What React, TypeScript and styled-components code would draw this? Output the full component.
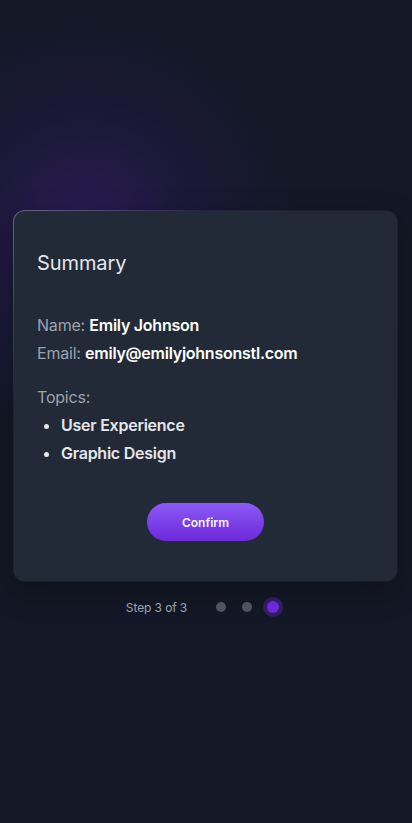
import styled, {createGlobalStyle} from 'styled-components'

const GlobalStyle = createGlobalStyle`
  html, body {
    margin: 0;
    padding: 0;
    background: #131826;
  }
  body {
    font-family: Inter, "Noto Sans", sans-serif;
    -webkit-font-smoothing: antialiased;
  }
`

const Page = styled.div`
  min-height: 823px;
  box-sizing: border-box;
  padding: 210px 14px 0 13px;
  background:
    radial-gradient(circle at 85px 225px, rgba(55, 28, 108, 0.65) 0px, rgba(42, 26, 88, 0.38) 100px, rgba(19, 24, 38, 0) 210px),
    #131826;
`

const Card = styled.section`
  box-sizing: border-box;
  width: 385px;
  padding: 38px 23px 40px;
  border-radius: 12px;
  border: 1px solid transparent;
  background:
    linear-gradient(#222a37, #222a37) padding-box,
    linear-gradient(135deg, rgba(255, 255, 255, 0.32), rgba(255, 255, 255, 0.05) 25%, rgba(255, 255, 255, 0.02)) border-box;
  box-shadow: 0 10px 30px rgba(0, 0, 0, 0.25);
`

const Title = styled.h2`
  margin: 0 0 34px;
  font-size: 20px;
  line-height: 28px;
  font-weight: 400;
  letter-spacing: -0.1px;
  color: #e5e7eb;
`

const Field = styled.p`
  margin: 0;
  font-size: 16px;
  line-height: 28px;
  letter-spacing: -0.2px;
  color: #9ca3af;
`

const Value = styled.span`
  color: #ffffff;
  font-weight: 600;
  letter-spacing: -0.25px;
`

const TopicsLabel = styled(Field)`
  margin-top: 16px;
`

const TopicList = styled.ul`
  margin: 0;
  padding-left: 24px;
  list-style: disc;
  color: #e5e7eb;

  li {
    font-size: 16px;
    line-height: 28px;
    font-weight: 600;
    letter-spacing: -0.25px;
  }
`

const Actions = styled.div`
  display: flex;
  justify-content: center;
  margin-top: 36px;
`

const ConfirmButton = styled.button`
  width: 117px;
  height: 38px;
  border: none;
  border-radius: 19px;
  background: linear-gradient(180deg, #8b5cf6, #6d28d9);
  color: #f3f4f6;
  font-family: inherit;
  font-size: 12px;
  font-weight: 600;
  cursor: pointer;
`

const Steps = styled.div`
  display: flex;
  align-items: center;
  justify-content: center;
  gap: 24px;
  margin-top: 15px;
  width: 383px;
`

const StepText = styled.span`
  font-size: 12px;
  letter-spacing: -0.1px;
  color: #9ca3af;
`

const Dots = styled.div`
  display: flex;
  gap: 6px;
`

const Dot = styled.span<{$active?: boolean}>`
  width: 20px;
  height: 20px;
  border-radius: 50%;
  display: flex;
  align-items: center;
  justify-content: center;
  background: ${p => (p.$active ? 'rgba(109, 40, 217, 0.35)' : 'transparent')};

  &::after {
    content: '';
    width: ${p => (p.$active ? '12px' : '10px')};
    height: ${p => (p.$active ? '12px' : '10px')};
    border-radius: 50%;
    background: ${p => (p.$active ? '#6d28d9' : '#4b5563')};
  }
`

const topics = ['User Experience', 'Graphic Design']

export default function App() {
    return (
        <>
            <GlobalStyle/>
            <Page>
                <Card>
                    <Title>Summary</Title>
                    <Field>Name: <Value>Emily Johnson</Value></Field>
                    <Field>Email: <Value>emily@emilyjohnsonstl.com</Value></Field>
                    <TopicsLabel>Topics:</TopicsLabel>
                    <TopicList>
                        {topics.map(t => <li key={t}>{t}</li>)}
                    </TopicList>
                    <Actions>
                        <ConfirmButton>Confirm</ConfirmButton>
                    </Actions>
                </Card>
                <Steps>
                    <StepText>Step 3 of 3</StepText>
                    <Dots>
                        <Dot/>
                        <Dot/>
                        <Dot $active/>
                    </Dots>
                </Steps>
            </Page>
        </>
    )
}
